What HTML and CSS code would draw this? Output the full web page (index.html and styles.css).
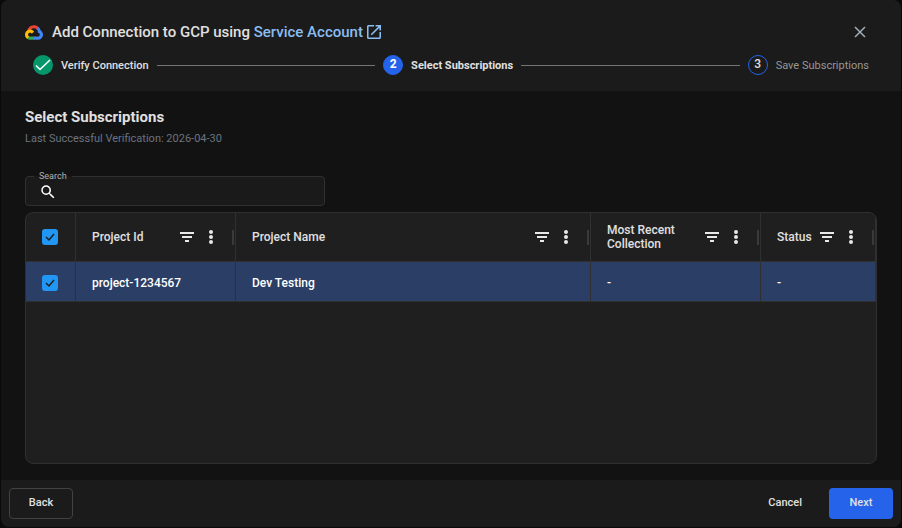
FILE: index.html
```html
<!DOCTYPE html>
<html lang="en">

<head>
    <meta charset="UTF-8">
    <meta name="viewport" content="width=device-width, initial-scale=1.0">
    <title>Add Connection to GCP</title>
    <link rel="stylesheet" href="styles.css">
</head>

<body>
    <svg class="sprite" aria-hidden="true">
        <symbol id="filter" viewBox="0 0 18 18">
            <path d="M2 4h14v2H2zM4 8h10v2H4zM7 12h4v2H7z" />
        </symbol>
        <symbol id="dots" viewBox="0 0 18 18">
            <circle cx="9" cy="4" r="2" />
            <circle cx="9" cy="9" r="2" />
            <circle cx="9" cy="14" r="2" />
        </symbol>
    </svg>

    <div class="dialog" role="dialog" aria-labelledby="dialogTitle">
        <header class="dialog-header">
            <div class="title-bar">
                <svg class="gcp-logo" viewBox="0 0 256 206">
                    <path fill="#ea4335" d="M170.3 56.8l22.2-22.2 1.5-9.4C153.4-11.6 88.9-7.5 52.4 33.9 42.2 45.4 34.7 59.8 30.7 74.5l8-1.1 44.5-7.3 3.4-3.5c19.8-21.7 53.2-24.6 76-6.1l7.7.3z" />
                    <path fill="#4285f4" d="M224.2 73.9c-5.1-18.8-15.6-35.7-30.2-48.7l-31.2 31.2c13.2 10.8 20.7 27 20.4 44v5.5c15.4 0 27.8 12.4 27.8 27.8 0 15.3-12.4 27.4-27.8 27.4h-55.6l-5.5 6v33.3l5.5 5.3h55.6c39.9.3 72.5-31.7 72.8-71.6.2-24.2-11.8-46.8-31.8-60.2z" />
                    <path fill="#34a853" d="M72 205.8h55.6v-44.5H72c-4 0-7.9-.9-11.5-2.5l-7.9 2.4-22.3 22.2-2 7.5c12.6 9.5 27.9 15 43.7 14.9z" />
                    <path fill="#fbbc05" d="M72 61.4C32.1 61.7 0 94.2.2 134.1c.1 22.3 10.5 43.3 28.1 56.8l32.2-32.1c-14-6.4-20.2-22.8-13.8-36.8 6.3-14 22.8-20.2 36.8-13.8 6.2 2.8 11.1 7.7 13.8 13.8l32.3-32.2C115.9 71.8 94.6 61.3 72 61.4z" />
                </svg>
                <h1 id="dialogTitle">Add Connection to GCP using <a href="#">Service Account<svg viewBox="0 0 18 18" class="open-icon">
                    <path d="M16 16H2V2h7V0H2C.9 0 0 .9 0 2v14c0 1.100.9 2 2 2h14c1.100 0 2-.9 2-2V9h-2v7zM11 0v2h3.600l-9.800 9.800 1.400 1.400L16 3.400V7h2V0h-7z" />
                </svg></a></h1>
                <button class="close-btn" type="button" aria-label="Close">
                    <svg viewBox="0 0 12 12"><path d="M1 1l10 10M11 1L1 11" /></svg>
                </button>
            </div>

            <ol class="stepper">
                <li class="step done">
                    <span class="step-icon">
                        <svg viewBox="0 0 20 20"><path d="M3 10.500l4 4L17 5" /></svg>
                    </span>
                    <span class="step-label">Verify Connection</span>
                </li>
                <li class="step active" aria-current="step">
                    <span class="step-icon">2</span>
                    <span class="step-label">Select Subscriptions</span>
                </li>
                <li class="step">
                    <span class="step-icon">3</span>
                    <span class="step-label">Save Subscriptions</span>
                </li>
            </ol>
        </header>

        <main class="dialog-body">
            <h2>Select Subscriptions</h2>
            <p class="subtitle">Last Successful Verification: 2026-04-30</p>

            <fieldset class="search">
                <legend><label for="search">Search</label></legend>
                <svg viewBox="0 0 24 24">
                    <path d="M15.500 14h-.79l-.28-.27A6.470 6.470 0 0 0 16 9.500 6.500 6.500 0 1 0 9.500 16c1.610 0 3.090-.59 4.230-1.570l.27.28v.79l5 4.990L20.490 19l-4.990-5zm-6 0C7.010 14 5 11.990 5 9.500S7.010 5 9.500 5 14 7.010 14 9.500 11.990 14 9.500 14z" />
                </svg>
                <input type="text" id="search">
            </fieldset>

            <div class="grid">
                <table>
                    <colgroup>
                        <col class="col-check">
                        <col class="col-id">
                        <col>
                        <col class="col-recent">
                        <col class="col-status">
                    </colgroup>
                    <thead>
                        <tr>
                            <th class="check-cell"><input type="checkbox" aria-label="Select all" checked></th>
                            <th>
                                <div class="head-cell">
                                    <span>Project Id</span>
                                    <button type="button" aria-label="Filter Project Id"><svg><use href="#filter" /></svg></button>
                                    <button type="button" aria-label="Project Id menu"><svg><use href="#dots" /></svg></button>
                                </div>
                            </th>
                            <th>
                                <div class="head-cell">
                                    <span>Project Name</span>
                                    <button type="button" aria-label="Filter Project Name"><svg><use href="#filter" /></svg></button>
                                    <button type="button" aria-label="Project Name menu"><svg><use href="#dots" /></svg></button>
                                </div>
                            </th>
                            <th>
                                <div class="head-cell">
                                    <span>Most Recent Collection</span>
                                    <button type="button" aria-label="Filter Most Recent Collection"><svg><use href="#filter" /></svg></button>
                                    <button type="button" aria-label="Most Recent Collection menu"><svg><use href="#dots" /></svg></button>
                                </div>
                            </th>
                            <th>
                                <div class="head-cell">
                                    <span>Status</span>
                                    <button type="button" aria-label="Filter Status"><svg><use href="#filter" /></svg></button>
                                    <button type="button" aria-label="Status menu"><svg><use href="#dots" /></svg></button>
                                </div>
                            </th>
                        </tr>
                    </thead>
                    <tbody>
                        <tr class="selected">
                            <td class="check-cell"><input type="checkbox" aria-label="Select project-1234567" checked></td>
                            <td>project-1234567</td>
                            <td>Dev Testing</td>
                            <td>-</td>
                            <td>-</td>
                        </tr>
                    </tbody>
                </table>
            </div>
        </main>

        <footer class="dialog-footer">
            <button class="btn back-btn" type="button">Back</button>
            <button class="btn cancel-btn" type="button">Cancel</button>
            <button class="btn next-btn" type="button">Next</button>
        </footer>
    </div>
</body>

</html>
```
FILE: styles.css
```css
* {
    padding: 0;
    margin: 0;
    box-sizing: border-box;
}

body {
    font-family: Roboto, sans-serif;
    font-size: 12px;
    color: #e0e0e0;
    background: #0a0a0a;
}

button,
input {
    font: inherit;
    color: inherit;
}

button {
    border: none;
    background: none;
    cursor: pointer;
}

.sprite {
    display: none;
}

.dialog {
    display: flex;
    flex-direction: column;
    min-height: calc(100vh - 1px);
    margin: 0 1px 1px;
    border-radius: 8px;
    background: #121212;
    overflow: hidden;
}

/* header */
.dialog-header {
    padding: 20px 24px 16px;
    background: #1b1b1b;
}

.title-bar {
    display: flex;
    align-items: center;
    height: 24px;
}

.gcp-logo {
    width: 18px;
    height: 15px;
    margin-right: 9px;
}

h1 {
    flex: 1;
    font-size: 15px;
    font-weight: 500;
    line-height: 24px;
}

h1 a {
    color: #8abdf0;
    text-decoration: none;
}

.open-icon {
    width: 14px;
    height: 14px;
    margin-left: 4px;
    vertical-align: -2px;
    fill: currentColor;
}

.close-btn {
    width: 34px;
    height: 24px;
}

.close-btn svg {
    display: block;
    width: 12px;
    height: 12px;
    margin: auto;
    stroke: #a3acb9;
    stroke-width: 1.5;
}

.stepper {
    display: flex;
    align-items: center;
    margin-top: 11px;
    padding: 0 8px;
    list-style: none;
}

.step {
    display: flex;
    align-items: center;
    gap: 8px;
    flex: none;
    font-size: 11px;
    color: #979797;
}

.step:not(:last-child) {
    flex: 1 1 auto;
    margin-right: 8px;
}

.step:not(:last-child)::after {
    content: "";
    flex: 1;
    height: 1px;
    background: #757575;
}

.step-icon {
    display: flex;
    align-items: center;
    justify-content: center;
    width: 20px;
    height: 20px;
    border: 1px solid #2563eb;
    border-radius: 50%;
    font-size: 12px;
    font-weight: 500;
    line-height: 16px;
    padding-bottom: 2px;
    color: #e0e0e0;
}

.step.active {
    font-weight: 700;
    color: #e0e0e0;
}

.step.active .step-icon {
    background: #2563eb;
    font-weight: 700;
    color: #fff;
}

.step.done {
    font-weight: 500;
    color: #e0e0e0;
}

.step.done .step-icon {
    padding: 0;
    border: none;
    background: #059669;
}

.step-icon svg {
    width: 20px;
    height: 20px;
    fill: none;
    stroke: #fff;
    stroke-width: 1.6;
}

/* body */
.dialog-body {
    display: flex;
    flex: 1;
    flex-direction: column;
    padding: 16px 24px;
}

h2 {
    font-size: 15px;
    font-weight: 700;
    line-height: 20px;
}

.subtitle {
    margin-top: 5px;
    font-size: 11px;
    line-height: 14px;
    color: #6b7280;
}

.search {
    display: flex;
    align-items: center;
    width: 300px;
    height: 36px;
    margin-top: 24px;
    padding: 0 13px 2px;
    border: 1px solid #303030;
    border-radius: 4px;
    background: #1a1a1a;
}

.search legend {
    margin-left: -5px;
    padding: 0 5px;
    font-size: 9px;
    line-height: 12px;
    color: #b0b0b0;
}

.search svg {
    flex: none;
    width: 18px;
    height: 18px;
    fill: #fff;
}

.search input {
    flex: 1;
    min-width: 0;
    height: 20px;
    margin-left: 8px;
    border: none;
    outline: none;
    background: none;
}

.grid {
    flex: 1;
    margin-top: 6px;
    border: 1px solid #303030;
    border-radius: 8px;
    background: #1f1f1f;
    overflow: hidden;
}

table {
    width: 100%;
    table-layout: fixed;
    border-collapse: separate;
    border-spacing: 0;
}

.col-check {
    width: 50px;
}

.col-id {
    width: 160px;
}

.col-recent {
    width: 170px;
}

.col-status {
    width: 115px;
}

th,
td {
    border-right: 1px solid #303030;
    border-bottom: 1px solid #303030;
    font-weight: 500;
    text-align: left;
}

th {
    height: 49px;
    padding-left: 16px;
}

td {
    height: 40px;
    padding: 2px 16px 0;
    color: #fff;
}

.selected td {
    background: #2a3e66;
}

.check-cell,
td.check-cell {
    padding-left: 0;
    padding-right: 1px;
}

.check-cell input {
    display: block;
    width: 16px;
    height: 16px;
    margin: auto;
    border-radius: 3px;
    appearance: none;
    background: #2196f3 url("data:image/svg+xml,%3Csvg xmlns='http://www.w3.org/2000/svg' viewBox='0 0 16 16'%3E%3Cpath d='M4 8l3 3 5-6' fill='none' stroke='%231f1f1f' stroke-width='1.500'/%3E%3C/svg%3E");
}

.head-cell {
    display: flex;
    align-items: center;
    line-height: 14px;
}

.head-cell::after {
    content: "";
    width: 2px;
    height: 15px;
    margin: 0 1px 0 12px;
    background: #3a3a3a;
}

.head-cell span {
    flex: 1;
}

.head-cell button {
    width: 18px;
    height: 18px;
    margin-left: 6px;
}

.head-cell svg {
    display: block;
    width: 18px;
    height: 18px;
    fill: #e8e8e8;
}

/* footer */
.dialog-footer {
    display: flex;
    gap: 8px;
    padding: 8px;
    background: #1b1b1b;
}

.btn {
    height: 31px;
    padding: 0 18px 2px;
    border: 1px solid transparent;
    border-radius: 4px;
    font-size: 11px;
    font-weight: 500;
}

.back-btn {
    width: 64px;
    margin-right: auto;
    border-color: #424242;
}

.next-btn {
    width: 64px;
    background: #2563eb;
}
```
